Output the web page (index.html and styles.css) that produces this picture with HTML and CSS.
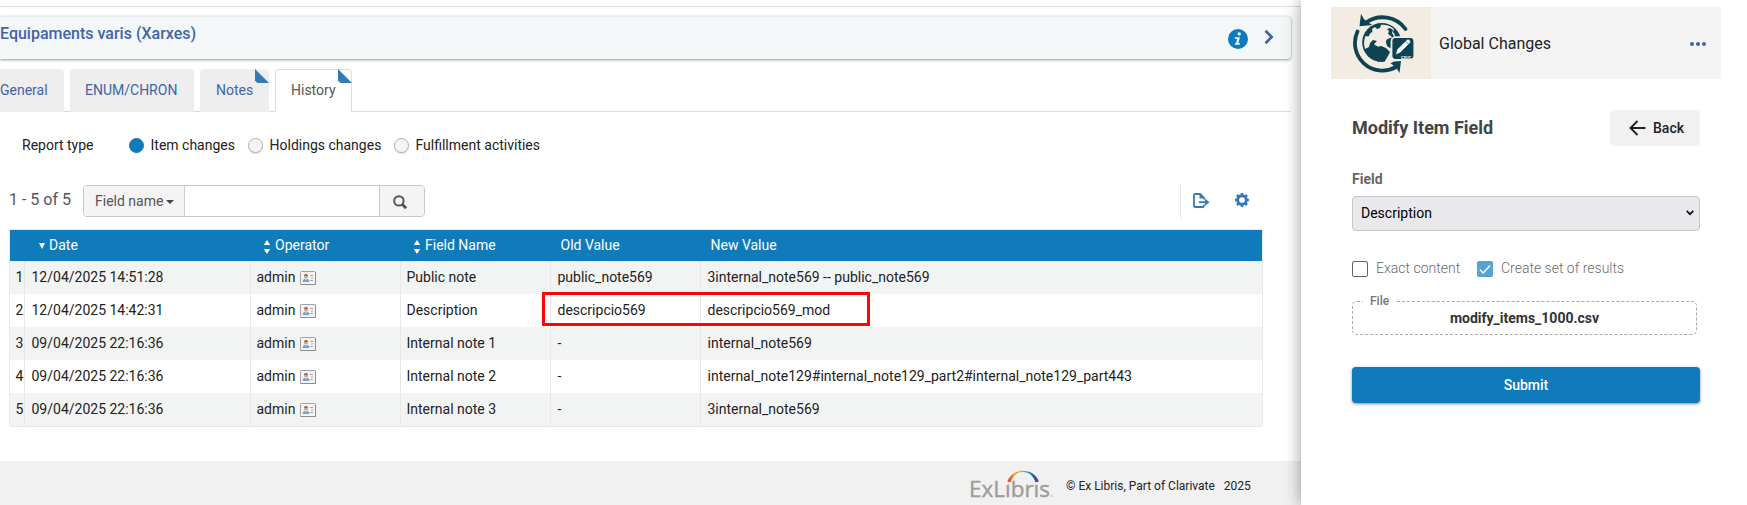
FILE: index.html
```html
<!DOCTYPE html>
<html lang="en">
<head>
<meta charset="utf-8">
<title>Physical item - History</title>
<link rel="stylesheet" href="styles.css">
</head>
<body>
<svg class="defs" width="0" height="0">
  <symbol id="card" viewBox="0 0 16 14">
    <rect x=".5" y=".5" width="15" height="13" rx=".8" fill="#f4f4f4" stroke="#a3a3a3"/>
    <path d="M.5 13.5h15V1" fill="none" stroke="#8d8d8d"/>
    <path d="M2.6 11c0-2.200 1.200-3.400 3.400-3.400S9.400 8.800 9.400 11z" fill="#6fa3d8"/>
    <path d="M5 7.400h2L6 9.600z" fill="#fff"/>
    <circle cx="6" cy="5.400" r="2" fill="#d8a47c"/>
    <path d="M4 5c0-2.700 4-2.700 4 0-1.200-.8-2.800-.8-4 0z" fill="#7d5b45"/>
    <path d="M10 4.500h3M11 7h2M10 9.500h3" stroke="#a9a9a9"/>
  </symbol>
  <symbol id="sort" viewBox="0 0 8 14"><path d="M4 0l3.200 5H.8zM4 14L.8 9h6.400z" fill="#fff"/></symbol>
</svg>
<div class="app">
  <main class="main">
    <div class="top-line"></div>
    <header class="title-bar">
      <h1 class="title">Equipaments varis (Xarxes)</h1>
      <svg class="info" width="20" height="20" viewBox="0 0 20 20"><circle cx="10" cy="10" r="10" fill="#0f7bbb"/><circle cx="11.200" cy="4.900" r="1.700" fill="#fff"/><path d="M7 8.200h4.900l-1.600 5.900h1.500l-.3 1.600H6.800l.4-1.500h.9l1.100-4.500H6.700z" fill="#fff"/></svg>
      <svg class="chevron" width="10" height="16" viewBox="0 0 10 16"><path d="M1.500 1.800L7.700 8l-6.200 6.200" fill="none" stroke="#4263a8" stroke-width="2.700"/></svg>
    </header>
    <nav class="tabs">
      <a class="tab tab-general">General</a>
      <a class="tab tab-enum">ENUM/CHRON</a>
      <a class="tab tab-notes flagged">Notes</a>
      <a class="tab tab-history flagged active">History</a>
    </nav>
    <div class="report">
      <span class="report-label">Report type</span>
      <label class="option opt-1"><i class="radio on"></i>Item changes</label>
      <label class="option opt-2"><i class="radio"></i>Holdings changes</label>
      <label class="option"><i class="radio"></i>Fulfillment activities</label>
    </div>
    <div class="toolbar">
      <span class="count">1 - 5 of 5</span>
      <div class="search">
        <span class="search-field">Field name<i class="caret"></i></span>
        <input class="search-input" aria-label="Search">
        <span class="search-btn"><svg width="15" height="15" viewBox="0 0 15 15"><circle cx="5.900" cy="5.900" r="4.700" fill="none" stroke="#555" stroke-width="2"/><path d="M9.200 9.200l4 4" stroke="#555" stroke-width="3"/></svg></span>
      </div>
      <div class="tools">
        <svg width="17" height="15" viewBox="0 0 17 15"><path d="M11 11.500v1.200q0 1.300-1.300 1.300H2.300Q1 14 1 12.700V2.300Q1 1 2.300 1h4.800L11 4.900V6.500" fill="none" stroke="#337ab7" stroke-width="1.800"/><path d="M6.500 1v4.500H11z" fill="#337ab7"/><path d="M6 9.200h8" stroke="#337ab7" stroke-width="1.900"/><path d="M12 5.500l4.500 3.700-4.500 3.600z" fill="#337ab7"/></svg>
        <svg width="14" height="14" viewBox="0 0 14 14"><circle cx="7" cy="7" r="4.300" fill="none" stroke="#337ab7" stroke-width="2.900"/><path d="M7 0v2.500M7 11.500V14M0 7h2.500M11.500 7H14M2 2l2 2M10 10l2 2M12 2l-2 2M4 10l-2 2" stroke="#337ab7" stroke-width="2.600"/></svg>
      </div>
    </div>
    <table class="grid">
      <colgroup><col class="c-num"><col class="c-date"><col class="c-mid"><col class="c-mid"><col class="c-mid"><col></colgroup>
      <thead><tr>
        <th></th>
        <th class="th-date"><i class="down"></i>Date</th>
        <th class="th-sort"><svg class="sort"><use href="#sort"/></svg>Operator</th>
        <th class="th-sort"><svg class="sort"><use href="#sort"/></svg>Field Name</th>
        <th>Old Value</th><th>New Value</th>
      </tr></thead>
      <tbody>
        <tr><td>1</td><td>12/04/2025 14:51:28</td><td>admin<svg class="card"><use href="#card"/></svg></td><td>Public note</td><td>public_note569</td><td>3internal_note569 -- public_note569</td></tr>
        <tr><td>2</td><td>12/04/2025 14:42:31</td><td>admin<svg class="card"><use href="#card"/></svg></td><td>Description</td><td class="marked">descripcio569<i class="highlight"></i></td><td>descripcio569_mod</td></tr>
        <tr><td>3</td><td>09/04/2025 22:16:36</td><td>admin<svg class="card"><use href="#card"/></svg></td><td>Internal note 1</td><td>-</td><td>internal_note569</td></tr>
        <tr><td>4</td><td>09/04/2025 22:16:36</td><td>admin<svg class="card"><use href="#card"/></svg></td><td>Internal note 2</td><td>-</td><td>internal_note129#internal_note129_part2#internal_note129_part443</td></tr>
        <tr><td>5</td><td>09/04/2025 22:16:36</td><td>admin<svg class="card"><use href="#card"/></svg></td><td>Internal note 3</td><td>-</td><td>3internal_note569</td></tr>
      </tbody>
    </table>
    <footer class="footer">
      <svg class="logo" width="84" height="34" viewBox="0 0 84 34">
        <defs><linearGradient id="arc"><stop offset="0" stop-color="#e33a26"/><stop offset=".25" stop-color="#f9a51a"/><stop offset=".42" stop-color="#c9c93c"/><stop offset=".6" stop-color="#35a8dc"/><stop offset=".8" stop-color="#1767b1"/><stop offset="1" stop-color="#60308c"/></linearGradient></defs>
        <text class="logo-text" x="-1" y="28" textLength="81" lengthAdjust="spacingAndGlyphs">ExLıbrıs</text>
        <circle cx="81.500" cy="27" r=".8" fill="#aaa"/>
        <path d="M37.300 12.500C40 5.500 46 1.800 53 1.800s13 3.700 15.900 10.700l-3.400.7C63 6.500 59 3 53 3S43 6.500 40.800 13.200z" fill="url(#arc)"/>
      </svg>
      <span class="copy">© Ex Libris, Part of Clarivate</span><span class="copy">2025</span>
    </footer>
  </main>
  <aside class="panel">
    <div class="app-head">
      <div class="app-logo">
        <svg width="64" height="62" viewBox="0 0 64 62">
          <g fill="none" stroke="#0e4354" stroke-width="3.800" stroke-linecap="round"><path d="M14 9.500A28.500 28.500 0 0 1 53.500 16"/><path d="M5.500 18.500A27.500 27.500 0 0 0 44 54"/></g>
          <path d="M9 .8L7.500 13.200l12.800-1.200-4.300-2.700-4-3zM47.500 60l1.500-12-12.500 1 4 2.800 3.800 3z" fill="#0e4354"/>
          <circle cx="29.700" cy="29.500" r="19.500" fill="#0e4354"/>
          <path d="M13 36c-1.500-5-1.200-9 .5-13l3 .5 2-3.500 2-1-.5-3 3-2 3 1 2-3c5-1 10 .5 14 4l-1 3 2 3-1 4 4 3v14c-3 6-9 9-14 9l1-4 3-5 2-4-4-4-5-2-4 1-3-3 3-3-4-1-3 3-1 4z" fill="#f2ece2"/>
          <path d="M19 34l5-1.500 4 2.500 5 2-1 4-3 3-1 4-2 1-3-5-1-4-4-3z" fill="#0e4354"/>
          <path d="M23 14l2 2 3-1 1-3-3-.5zM35 16l2 2-1 3 3 2 2 4 1-4-2-3 1-3-3-2zM34 29c0-3 3-4 5-4l3 1v10l-4-1-3-2z" fill="#0e4354"/>
          <rect x="39.500" y="24.200" width="22.800" height="22.600" rx="4" fill="#0e4354" stroke="#f2ece2" stroke-width="1.800"/>
          <path d="M43.500 42l1.400-5.500 10-9.800c1.700-1.400 4.800 1.500 3.200 3.300l-9.800 9.800zM53.500 28.200l3 3" fill="#fff" stroke="#0e4354" stroke-width=".7"/>
          <text class="logo-caption" x="49" y="45.500">CSUC</text>
        </svg>
      </div>
      <span class="app-name">Global Changes</span>
      <span class="dots"><i></i><i></i><i></i></span>
    </div>
    <section class="form">
      <div class="form-head">
        <h2 class="form-title">Modify Item Field</h2>
        <button class="back"><svg width="17" height="16" viewBox="0 0 17 16"><path d="M8.500 1L1.500 8l7 7M1.500 8H16.500" fill="none" stroke="#222" stroke-width="1.900"/></svg>Back</button>
      </div>
      <label class="field-label">Field</label>
      <div class="select"><span>Description</span><svg width="8" height="6" viewBox="0 0 8 6"><path d="M.7.900L4 4.200 7.300.9" fill="none" stroke="#111" stroke-width="1.700"/></svg></div>
      <div class="checks">
        <label class="check check-1"><i class="box"></i>Exact content</label>
        <label class="check"><i class="box checked"><svg width="16" height="16" viewBox="0 0 16 16"><path d="M2.800 8.600l3.300 3.300 7-7.500" fill="none" stroke="#fff" stroke-width="1.400"/></svg></i>Create set of results</label>
      </div>
      <fieldset class="file"><legend>File</legend><span class="file-name">modify_items_1000.csv</span></fieldset>
      <button class="submit">Submit</button>
    </section>
  </aside>
</div>
</body>
</html>
```
FILE: styles.css
```css
* { box-sizing: border-box; }
html { height: 505px; overflow: hidden; }
body { margin: 0; background: #fff; color: #222; font: 14px/20px Roboto, "Liberation Sans", sans-serif; }
.defs { position: absolute; }
.app { display: flex; width: 1747px; height: 505px; overflow: hidden; }
.main { width: 1301px; height: 505px; display: flex; flex-direction: column; flex: none; }
.top-line { height: 1px; margin-top: 6px; background: #ddd; flex: none; }
.title-bar { height: 43px; width: 1291px; margin-top: 9px; flex: none; display: flex; align-items: flex-start; background: #f3f7f8; border-top: 1px solid #e8ebec; border-radius: 0 4px 4px 0; box-shadow: 0 1px 3px rgba(0,0,0,.4); }
.title { margin: 7px 0 0; font-size: 16px; line-height: 20px; font-weight: 500; color: #4263a8; flex: 1; }
.info { margin: 12px 16px 0 0; }
.chevron { margin: 12px 17px 0 0; }
.tabs { display: flex; gap: 6px; width: 1291px; height: 43px; margin-top: 10px; border-bottom: 1px solid #ddd; flex: none; }
.tab { position: relative; height: 43px; line-height: 43px; border-radius: 4px 4px 0 0; background: #eee; color: #4263a8; padding-left: 16px; }
.tab-general { width: 64px; padding-left: 0; border-top-left-radius: 0; }
.tab-enum { width: 124px; padding-left: 15px; }
.tab-notes { width: 69px; }
.tab-history { width: 77px; }
.active { background: #fff; color: #555; border: 1px solid #ddd; border-bottom: 0; padding-left: 15px; line-height: 41px; }
.flagged::after { content: ""; position: absolute; top: 0; right: 0; width: 14px; height: 14px; background: #337ab7; clip-path: polygon(0 0, 100% 100%, 20% 100%, 0 85%); }
.active::after { top: -1px; right: -1px; }
.report { display: flex; align-items: center; height: 20px; margin: 23px 0 0 22px; flex: none; }
.report-label { width: 107px; }
.option { display: flex; align-items: center; gap: 6.500px; }
.opt-1 { width: 119px; }
.opt-2 { width: 146px; }
.radio { width: 15px; height: 15px; border: 1px solid #b5b5b5; border-radius: 50%; background: #f4f4f4; box-shadow: 0 1px 1px rgba(0,0,0,.15); }
.radio.on { background: #0f7bbb; border-color: #0f7bbb; box-shadow: none; }
.toolbar { display: flex; height: 35px; margin: 30px 0 0 9px; width: 1254px; flex: none; }
.count { width: 74px; font-size: 16px; line-height: 30px; color: #555; }
.search { display: flex; width: 342px; height: 32px; border: 1px solid #c8c8c8; border-radius: 4px; overflow: hidden; color: #555; }
.search-field { width: 101px; padding: 0 0 1px 11px; background: #f4f4f4; border-right: 1px solid #ccc; display: flex; align-items: center; }
.caret { border: 4px solid transparent; border-top-color: #444; border-bottom: 0; margin: 2px 0 0 3px; }
.search-input { width: 194px; border: 0; padding: 0 8px; background: #fff; }
.search-btn { flex: 1; background: #f4f4f4; border-left: 1px solid #c8c8c8; padding: 9px 0 0 13px; line-height: 0; }
.tools { margin-left: auto; width: 83px; height: 34px; border-left: 1px solid #e5e5e5; display: flex; gap: 25px; padding: 8px 0 0 11.500px; }
.grid { width: 1254px; margin: 9px 0 0 9px; table-layout: fixed; border-collapse: separate; border-spacing: 0; border: 1px solid #e8e8e8; border-radius: 2px; flex: none; }
.c-num { width: 15px; }
.c-date { width: 226px; }
.c-mid { width: 150px; }
.grid th { height: 31px; padding: 0 0 1px 9.500px; background: #0f7bbb; color: #fff; font-weight: 400; text-align: left; line-height: 20px; }
.grid th.th-date { padding-left: 14px; }
.grid th.th-sort { padding-left: 12px; }
.down { display: inline-block; border: 3.500px solid transparent; border-top: 6px solid #fff; border-bottom: 0; margin-right: 4px; vertical-align: 1px; }
.sort { width: 8px; height: 14px; margin-right: 4px; vertical-align: -4px; }
.grid td { height: 33px; padding: 0 0 1px 5.500px; line-height: 20px; border-right: 1px solid #e8e8e8; white-space: nowrap; }
.grid td:nth-child(2) { padding-left: 6.500px; }
.grid td:nth-child(n+5) { padding-left: 6.500px; }
.grid td:last-child { border-right: 0; }
.grid tbody tr:nth-child(odd) { background: #f2f4f4; }
.card { width: 16px; height: 14px; margin-left: 5px; vertical-align: -3px; }
.grid .marked { position: relative; }
.highlight { position: absolute; left: -9px; top: -2px; width: 328px; height: 34px; border: 3px solid #fb0505; }
.footer { margin-top: auto; height: 44px; background: #f1f1f1; display: flex; align-items: center; padding: 6px 0 0 970px; font-size: 12px; flex: none; }
.logo { margin-right: 12px; overflow: visible; }
.logo-text { font: 22px/1 "Open Sans", sans-serif; fill: #9c9c9c; stroke: #9c9c9c; stroke-width: .4; }
.copy { margin-right: 9px; }
.panel { width: 446px; padding: 7px 26px 0 30px; background: #fff; box-shadow: 0 0 16px rgba(0,0,0,.4); position: relative; }
.app-head { display: flex; height: 72px; background: #f4f4f4; align-items: center; }
.app-logo { width: 100px; height: 72px; background: #f2ece2; padding: 6px 0 0 21px; }
.logo-caption { font: bold 4px Roboto, sans-serif; fill: #fff; }
.app-name { margin: 2px 0 0 8px; font-size: 16px; }
.dots { display: flex; gap: 2px; margin: 1px 15px 0 auto; }
.dots i { width: 4px; height: 4px; border-radius: 50%; background: #4263a8; }
.form { padding: 31px 21px 0; display: flex; flex-direction: column; }
.form-head { display: flex; justify-content: space-between; height: 36px; }
.form-title { margin: 0; font-size: 18px; line-height: 36px; font-weight: 700; color: #444; }
.back { width: 90px; height: 36px; border: 0; border-radius: 4px; background: #f1f1f1; font: 500 14px Roboto, sans-serif; color: #222; display: flex; align-items: center; justify-content: flex-start; gap: 7px; padding: 0 0 0 19px; }
.field-label { margin-top: 23px; height: 27px; font-weight: 700; color: #666; }
.select { height: 35px; border: 1px solid #c8c8c8; border-radius: 4px; background: #e9e9ed; color: #000; display: flex; align-items: center; justify-content: space-between; padding: 0 5px 1px 8px; }
.checks { display: flex; height: 20px; margin-top: 27px; }
.check { display: flex; align-items: center; gap: 8px; color: #6b6b6b; font-weight: 300; }
.check-1 { width: 125px; }
.box { width: 16px; height: 16px; border: 1px solid #666; border-radius: 2px; margin-top: 2px; }
.box.checked { border: 0; background: #57a3d1; line-height: 0; }
.file { margin: 14px 3px 0 0; height: 43px; border: 1px dashed #aaa; border-radius: 5px; padding: 0; text-align: center; min-width: 0; }
.file legend { margin-left: 10px; padding: 0 7px; font-size: 12px; line-height: 18px; font-weight: 500; color: #777; text-align: left; }
.file-name { display: block; line-height: 16px; font-weight: 700; color: #333; }
.submit { margin-top: 32px; height: 36px; border: 0; border-radius: 4px; background: #0f7bbb; color: #fff; font: 500 14px Roboto, sans-serif; box-shadow: 0 1px 3px rgba(0,0,0,.45); }
```
